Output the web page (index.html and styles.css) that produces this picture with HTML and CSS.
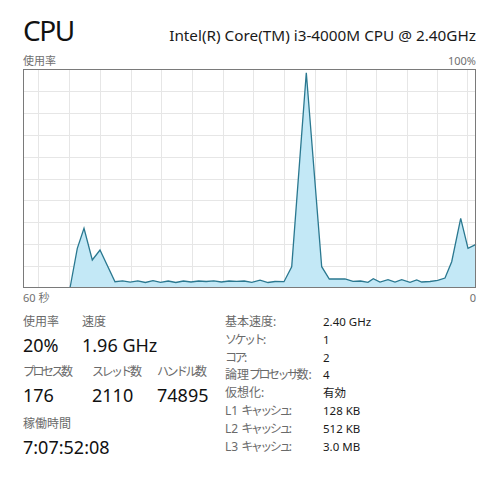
FILE: index.html
```html
<!DOCTYPE html>
<html lang="ja">
<head>
<meta charset="utf-8">
<title>CPU</title>
<link rel="stylesheet" href="styles.css">
</head>
<body>
<main class="page">
  <header class="head">
    <h1 class="title">CPU</h1>
    <div class="model">Intel(R) Core(TM) i3-4000M CPU @ 2.40GHz</div>
  </header>

  <div class="axis axis-top"><span>使用率</span><span>100%</span></div>

  <div class="graph">
    <svg class="chart" width="454" height="220" viewBox="23 69 454 220" xmlns="http://www.w3.org/2000/svg">
      <g class="grid">
        <path d="M38.5 70V288M69.5 70V288M100.5 70V288M131.5 70V288M161.5 70V288M192.5 70V288M223.5 70V288M253.5 70V288M284.5 70V288M315.5 70V288M346.5 70V288M376.5 70V288M407.5 70V288M437.5 70V288M467.5 70V288"/>
        <path d="M24 91.5H476M24 113.5H476M24 135.5H476M24 157.5H476M24 179.5H476M24 200.5H476M24 222.5H476M24 244.5H476M24 266.5H476"/>
      </g>
      <polygon class="area" points="70,288 77.3,248.3 84,228.3 92.3,260 100,250 115,281.7 122.6,280.8 130.2,282.2 137.8,280.8 145.4,282.5 153,280.6 160.6,282.3 168.2,281 175.8,282.5 183.4,281 191,282 198.6,281 206.2,281.5 213.8,280.8 221.4,282 229,281 236.6,281.4 244.2,281 251.8,282.3 260,280.2 268,282.5 275,281.5 284,281.7 291.7,266.7 306.3,72.7 321.7,266.7 329.3,279 345,279 353,281.3 360.5,281 368,282.3 373.3,278.7 380,282 388,279.7 395,282 401.7,279.7 410,282.3 416.7,280 421.7,282 430,281.5 437.7,280.3 445,278 451.7,261.7 460.7,218.3 468,248.3 476,244.3 476,288"/>
      <polyline class="line" points="70,288 77.3,248.3 84,228.3 92.3,260 100,250 115,281.7 122.6,280.8 130.2,282.2 137.8,280.8 145.4,282.5 153,280.6 160.6,282.3 168.2,281 175.8,282.5 183.4,281 191,282 198.6,281 206.2,281.5 213.8,280.8 221.4,282 229,281 236.6,281.4 244.2,281 251.8,282.3 260,280.2 268,282.5 275,281.5 284,281.7 291.7,266.7 306.3,72.7 321.7,266.7 329.3,279 345,279 353,281.3 360.5,281 368,282.3 373.3,278.7 380,282 388,279.7 395,282 401.7,279.7 410,282.3 416.7,280 421.7,282 430,281.5 437.7,280.3 445,278 451.7,261.7 460.7,218.3 468,248.3 476,244.3"/>
      <rect class="frame" x="23.5" y="69.5" width="452" height="218"/>
    </svg>
  </div>

  <div class="axis axis-bottom"><span>60 秒</span><span>0</span></div>

  <section class="details">
    <div class="stats">
      <div class="stat-row row-a">
        <div class="stat"><div class="stat-label">使用率</div><div class="stat-value">20%</div></div>
        <div class="stat"><div class="stat-label">速度</div><div class="stat-value">1.96 GHz</div></div>
      </div>
      <div class="stat-row row-b">
        <div class="stat"><div class="stat-label"><span class="kana">プロセス</span>数</div><div class="stat-value">176</div></div>
        <div class="stat"><div class="stat-label"><span class="kana">スレッド</span>数</div><div class="stat-value">2110</div></div>
        <div class="stat"><div class="stat-label"><span class="kana">ハンドル</span>数</div><div class="stat-value">74895</div></div>
      </div>
      <div class="stat-row row-c">
        <div class="stat"><div class="stat-label">稼働時間</div><div class="stat-value">7:07:52:08</div></div>
      </div>
    </div>
    <dl class="specs">
      <dt>基本速度:</dt><dd>2.40 GHz</dd>
      <dt><span class="kana">ソケット</span>:</dt><dd>1</dd>
      <dt><span class="kana">コア</span>:</dt><dd>2</dd>
      <dt>論理<span class="kana">プロセッサ</span>数:</dt><dd>4</dd>
      <dt>仮想化:</dt><dd>有効</dd>
      <dt>L1 <span class="kana">キャッシュ</span>:</dt><dd>128 KB</dd>
      <dt>L2 <span class="kana">キャッシュ</span>:</dt><dd>512 KB</dd>
      <dt>L3 <span class="kana">キャッシュ</span>:</dt><dd>3.0 MB</dd>
    </dl>
  </section>
</main>
</body>
</html>
```

FILE: styles.css
```css
* { box-sizing: border-box; }

html, body {
  margin: 0;
  padding: 0;
  background: #ffffff;
}

body {
  font-family: "Noto Sans", "Noto Sans CJK JP", sans-serif;
  color: #1a1a1a;
}

.page {
  width: 497px;
  padding: 16px 21px 0 23px;
}

.head {
  display: flex;
  justify-content: space-between;
  align-items: baseline;
  height: 28px;
}

.title {
  margin: 0;
  font-size: 28px;
  font-weight: 400;
  line-height: 28px;
  letter-spacing: -1.5px;
  color: #111;
}

.model {
  font-size: 15.3px;
  line-height: 20px;
  color: #1a1a1a;
}

.axis {
  display: flex;
  justify-content: space-between;
  font-size: 11px;
  line-height: 13px;
  color: #707070;
}

.axis-top {
  margin-top: 10px;
  height: 13px;
  margin-bottom: 2px;
}

.graph {
  width: 454px;
  height: 220px;
}

.chart {
  display: block;
}

.grid path {
  fill: none;
  stroke: #e6e6e6;
  stroke-width: 1;
}

.area {
  fill: #c3e8f6;
  stroke: none;
}

.line {
  fill: none;
  stroke: #2a7890;
  stroke-width: 1.3;
  stroke-linejoin: miter;
}

.frame {
  fill: none;
  stroke: #7a7a7a;
  stroke-width: 1;
}

.axis-bottom {
  margin-top: 2px;
  height: 13px;
}

.details {
  display: flex;
  margin-top: 9px;
}

.stats {
  width: 202px;
}

.stat-row {
  display: grid;
  margin-bottom: 6px;
}

.row-a { grid-template-columns: 59px auto; }
.row-b { grid-template-columns: 69px 65px auto; margin-bottom: 8px; }
.row-c { grid-template-columns: auto; }

.stat-label {
  font-size: 12px;
  line-height: 18px;
  color: #6a6a6a;
  white-space: nowrap;
}

.kana {
  letter-spacing: -2.5px;
}

.stat-value {
  margin-top: 2px;
  font-size: 18px;
  line-height: 24px;
  color: #111;
  white-space: nowrap;
}

.specs {
  margin: 0;
  display: grid;
  grid-template-columns: 98px auto;
  grid-auto-rows: 17.8px;
  font-size: 12px;
  line-height: 17.8px;
}

.specs dt {
  color: #6a6a6a;
  white-space: nowrap;
}

.specs dd {
  margin: 0;
  font-size: 11.5px;
  color: #1a1a1a;
  white-space: nowrap;
}
```
